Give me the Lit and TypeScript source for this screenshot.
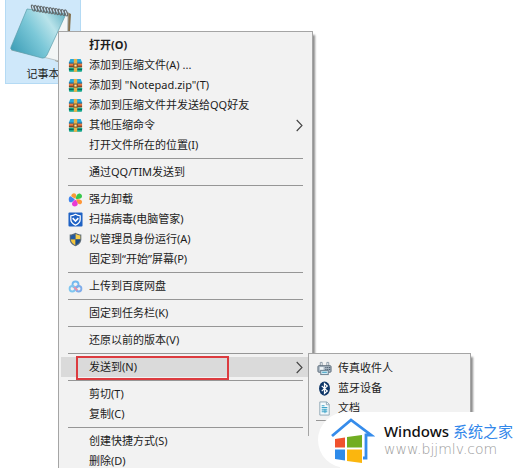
import { LitElement, html, css, svg, nothing, TemplateResult } from "lit";
import { customElement } from "lit/decorators.js";
import { classMap } from "lit/directives/class-map.js";

type Item = { label: string; icon?: TemplateResult; bold?: boolean; arrow?: boolean; active?: boolean };

const icon = (content: TemplateResult) =>
  html`<svg class="icon" viewBox="0 0 16 16" aria-hidden="true">${content}</svg>`;

const archive = icon(svg`
  <path d="M2.5 1h11l1.7 4H.8z" fill="#25a9dc"/>
  <path d="M1 4.6h14v1.8H1z" fill="#1b6f9c"/>
  <rect x="1" y="6" width="14" height="4.2" fill="#ee7b3e"/>
  <rect x="1" y="8.2" width="14" height="1.2" fill="#6b3a26"/>
  <rect x="1" y="10" width="14" height="4.6" rx="1" fill="#16a58a"/>
  <rect x="1" y="11.6" width="14" height="1" fill="#0c5853"/>
  <rect x="6.2" y="1" width="3.6" height="13.8" fill="#e6b34a"/>
  <rect x="5.6" y="6" width="4.8" height="4.2" fill="#80501f"/>
  <rect x="6.8" y="7" width="2.4" height="2.2" fill="#f4e9b0"/>`);

const clover = icon(svg`
  <path d="M7.2 7.600 2.800 4.600C.6 5 .2 8.800 1.600 10.600c1.800 1.200 4-.6 5.600-3z" fill="#3d83ee"/>
  <path d="M7.600 7.200 3.400 4.400C3.600 1.600 6.400.4 8 1.800c1.200 1.400.8 3.600-.4 5.400z" fill="#fa9a35"/>
  <path d="M8.200 7.200C8.600 3.600 10 1.200 12.600 1.600c2.800.8 3 4 1.200 5-1.800.9-3.700 1-5.600.6z" fill="#38c84c"/>
  <path d="M8.600 7.900c3.200-.8 6.400 0 6.400 2.700-.2 2.600-3 3.400-4.600 1.500C9.400 10.800 8.800 9.400 8.600 7.900z" fill="#ff9638"/>
  <path d="M7.900 8.200c2.400 2.400 3.500 5.400 1 6.800-2.200 1-4.900-.3-4.700-2.500.3-1.700 1.800-3.300 3.700-4.300z" fill="#e83bd5"/>`);

const guard = icon(svg`
  <rect x=".5" y=".5" width="15" height="15" rx="1" fill="#1f62c4"/>
  <path d="M8 2.500c1.600 1 3.400 1.500 5 1.500v4c0 3-2 4.700-5 6-3-1.300-5-3-5-6V4c1.600 0 3.400-.5 5-1.500z" fill="none" stroke="#fff" stroke-width="1.300"/>
  <path d="m5 6.600 3 3 3-3" fill="none" stroke="#fff" stroke-width="1.700"/>`);

const shield = icon(svg`
  <path d="M8 .8c2 1.300 4 1.900 6.200 1.900v5c0 3.700-2.700 6-6.200 7.600C4.500 13.700 1.800 11.400 1.800 7.700v-5C4 2.700 6 2.100 8 .8z" fill="#5d6c78"/>
  <path d="M7.800 2v5.700H2.900V3.700C4.700 3.600 6.300 3 7.800 2z" fill="#235ba3"/>
  <path d="M8.200 2v5.700h4.900V3.700c-1.800-.1-3.400-.7-4.900-1.700z" fill="#f7cf4b"/>
  <path d="M7.800 8.100H3c.2 2.700 2.200 4.600 4.800 5.900z" fill="#f4c53c"/>
  <path d="M8.200 8.100H13c-.2 2.700-2.200 4.600-4.800 5.900z" fill="#174b8b"/>`);

const cloud = icon(svg`
  <g fill="none" stroke-width="2">
    <circle cx="8" cy="5.800" r="3.200" stroke="#74b9ef"/>
    <circle cx="4.600" cy="10.400" r="2.900" stroke="#7fc6f0"/>
    <circle cx="11.400" cy="10.400" r="2.900" stroke="#7facea"/>
    <path d="m6.500 8.600 3.400 3.400" stroke="#ed8fa5"/>
  </g>`);

const fax = icon(svg`
  <path d="M3.500 6V1.500h2V6m5 0V1.500h2V6" fill="#fff" stroke="#8896a3"/>
  <rect x="1" y="5" width="14" height="7" rx="1" fill="#a9b7c3" stroke="#5b6b79"/>
  <rect x="3" y="6.500" width="4" height="3" fill="#eef4f8"/>
  <path d="M9 7h1m1 0h1m1 0h1M9 9h1m1 0h1m1 0h1" stroke="#283d50"/>
  <rect x="4" y="10" width="8" height="4.500" fill="#d4eaf4" stroke="#6a7d8c"/>
  <path d="M5.500 12h5" stroke="#2b96bb"/>`);

const bluetooth = icon(svg`
  <ellipse cx="8" cy="8" rx="5.800" ry="7.600" fill="#0d3567"/>
  <path d="m5 5.200 6 5.400-3 2.700V2.700l3 2.700-6 5.400" fill="none" stroke="#fff" stroke-width="1.300"/>`);

const documents = icon(svg`
  <path d="M3 1h7.500L13 3.500V15H3z" fill="#f4fafd" stroke="#8fa7b5"/>
  <path d="M10 1v3h3" fill="none" stroke="#8fa7b5"/>
  <path d="M5 5h3m-3 2h6M5 9.500h6m-6 2h6" stroke="#3fa4c8" stroke-width="1.200"/>
  <path d="M8.500 8.500V13" stroke="#3fa4c8"/>`);

const groups: Item[][] = [
  [
    { label: "打开(O)", bold: true },
    { label: "添加到压缩文件(A) ...", icon: archive },
    { label: '添加到 "Notepad.zip"(T)', icon: archive },
    { label: "添加到压缩文件并发送给QQ好友", icon: archive },
    { label: "其他压缩命令", icon: archive, arrow: true },
    { label: "打开文件所在的位置(I)" },
  ],
  [{ label: "通过QQ/TIM发送到" }],
  [
    { label: "强力卸载", icon: clover },
    { label: "扫描病毒(电脑管家)", icon: guard },
    { label: "以管理员身份运行(A)", icon: shield },
    { label: "固定到“开始”屏幕(P)" },
  ],
  [{ label: "上传到百度网盘", icon: cloud }],
  [{ label: "固定到任务栏(K)" }],
  [{ label: "还原以前的版本(V)" }],
  [{ label: "发送到(N)", arrow: true, active: true }],
  [{ label: "剪切(T)" }, { label: "复制(C)" }],
  [{ label: "创建快捷方式(S)" }, { label: "删除(D)" }],
];

const sendTargets: Item[] = [
  { label: "传真收件人", icon: fax },
  { label: "蓝牙设备", icon: bluetooth },
  { label: "文档", icon: documents },
];

@customElement("app-root")
export class AppRoot extends LitElement {
  static styles = css`
    :host {
      display: block;
      position: relative;
      height: 100vh;
      overflow: hidden;
      background: #fff;
      color: #1c1c1c;
      font: 11px/20px "Noto Sans", "Noto Sans CJK SC", sans-serif;
    }
    * { box-sizing: border-box; }
    button {
      font: inherit;
      color: inherit;
      border: 0;
      background: none;
      padding: 0;
      text-align: left;
    }
    .shortcut {
      display: flex;
      flex-direction: column;
      align-items: center;
      width: 76px;
      height: 84px;
      margin-left: 5px;
      background: #cfe8fa;
      border: 1px solid #b4daf4;
      border-top: 0;
    }
    .notepad { width: 72px; height: 64px; flex: none; }
    .menu, .submenu {
      position: absolute;
      background: #f2f2f2;
      border: 1px solid #a5a5a5;
      box-shadow: 2px 4px 2px rgba(0, 0, 0, 0.45);
    }
    .menu { left: 58px; top: 31px; width: 255px; padding: 3px 2px; }
    .group + .group { margin-top: 7px; position: relative; }
    .group + .group::before {
      content: "";
      position: absolute;
      top: -4px;
      left: 7px;
      right: 7px;
      border-top: 1px solid #969696;
    }
    .row { position: relative; }
    .item {
      display: grid;
      grid-template-columns: 14px 1fr 7px;
      column-gap: 7px;
      align-items: center;
      width: 100%;
      height: 20px;
      padding: 0 7px;
      white-space: nowrap;
    }
    .item.active { background: #dadada; }
    .item.bold { font-weight: 700; }
    .icon { width: 15px; height: 15px; grid-column: 1; }
    .label { grid-column: 2; }
    .arrow { width: 7px; height: 13px; grid-column: 3; }
    .mark {
      position: absolute;
      left: 15px;
      top: -1px;
      width: 153px;
      height: 24px;
      border: 2px solid #dc3b3f;
      pointer-events: none;
    }
    .submenu {
      left: calc(100% - 2px);
      top: -4px;
      width: 163px;
      height: 120px;
      padding: 4px 2px;
      border-left: 0;
      z-index: 1;
    }
    .submenu::before {
      content: "";
      position: absolute;
      left: 0;
      top: 0;
      height: 82px;
      border-left: 1px solid #a5a5a5;
    }
    .rule { border: 0; border-top: 1px solid #969696; margin: 2px 6px; }
    .brand {
      position: absolute;
      z-index: 2;
      right: 0;
      bottom: 0;
      width: 202px;
      height: 56px;
      display: flex;
      align-items: center;
      gap: 9px;
      padding-left: 12px;
      background: #fff;
      border-radius: 28px 0 0 28px;
      white-space: nowrap;
    }
    .backdrop {
      position: absolute;
      right: 0;
      bottom: 0;
      width: 180px;
      height: 55px;
      background: #fff;
      z-index: 2;
    }
    .house { width: 45px; height: 46px; flex: none; }
    .words { display: flex; flex-direction: column; padding-bottom: 2px; }
    .name { font: 500 15px/20px "Noto Sans", sans-serif; color: #111; }
    .name span { font: 15px/20px "Noto Sans CJK SC", sans-serif; color: #3287ea; }
    .site {
      font: 200 14px/16px "DejaVu Sans", sans-serif;
      color: #999;
      text-decoration: none;
    }
  `;

  private row(item: Item) {
    return html`<div class="row">
      <button
        class=${classMap({ item: true, bold: !!item.bold, active: !!item.active })}
        role="menuitem"
        aria-haspopup=${item.arrow ? "menu" : nothing}
      >
        ${item.icon ?? nothing}
        <span class="label">${item.label}</span>
        ${item.arrow
          ? html`<svg class="arrow" viewBox="0 0 7 13" aria-hidden="true">
              <path d="M.7 1 6 6.500.7 12" fill="none" stroke="#444" stroke-width="1.100" />
            </svg>`
          : nothing}
      </button>
      ${item.active
        ? html`<div class="mark"></div>
            <div class="submenu" role="menu" aria-label=${item.label}>
              ${sendTargets.map((target) => this.row(target))}
              <hr class="rule" />
            </div>`
        : nothing}
    </div>`;
  }

  render() {
    return html`
      <button class="shortcut">
        <svg class="notepad" viewBox="0 0 72 64" aria-hidden="true">
          <defs>
            <linearGradient id="cover" x1="0" y1="0.800" x2="1" y2="0.200">
              <stop offset="0" stop-color="#3f9fb8" />
              <stop offset="0.450" stop-color="#7cc8d8" />
              <stop offset="0.750" stop-color="#b9e3ea" />
              <stop offset="1" stop-color="#6fb9c9" />
            </linearGradient>
          </defs>
          <path d="M60 12 64 14 61 64 48 61z" fill="#85714f" />
          <path d="M4 50 40 58 60 63 61 12 54 16z" fill="#f3f6f6" stroke="#b9c3c6" />
          <path d="M20 9 59 14 40 55Q38 59 35 58L5 50Q3 49 4 47z" fill="url(#cover)" stroke="#5c9dab" stroke-width=".7" />
          <g fill="none" stroke="#646b6e" stroke-width="1.100">
            ${Array.from({ length: 12 }, (_, i) =>
              svg`<ellipse cx=${26 + i * 3} cy=${8 + i * 0.45} rx="1.200" ry="3.200" transform=${`rotate(-20 ${26 + i * 3} ${8 + i * 0.45})`} />`
            )}
          </g>
        </svg>
        <span>记事本</span>
      </button>

      <div class="menu" role="menu">
        ${groups.map(
          (group) => html`<div class="group" role="group">${group.map((item) => this.row(item))}</div>`
        )}
      </div>

      <div class="backdrop"></div>
      <div class="brand">
        <svg class="house" viewBox="0 0 45 46" aria-hidden="true">
          <path d="M2 19 21 3 41 18H36V41H33" fill="none" stroke="#368ceb" stroke-width="2.800" />
          <path d="M5 22 15 20.500V30.500H5z" fill="#f0512d" />
          <path d="M17 20 32 18V30.500H17z" fill="#71ad22" />
          <path d="M5 32.500H15V43.500L5 42z" fill="#2e8bea" />
          <path d="M17 32.500H32V46L17 44z" fill="#fbb60e" />
        </svg>
        <div class="words">
          <div class="name">Windows <span>系统之家</span></div>
          <a class="site" href="#">www.bjjmlv.com</a>
        </div>
      </div>
    `;
  }
}
